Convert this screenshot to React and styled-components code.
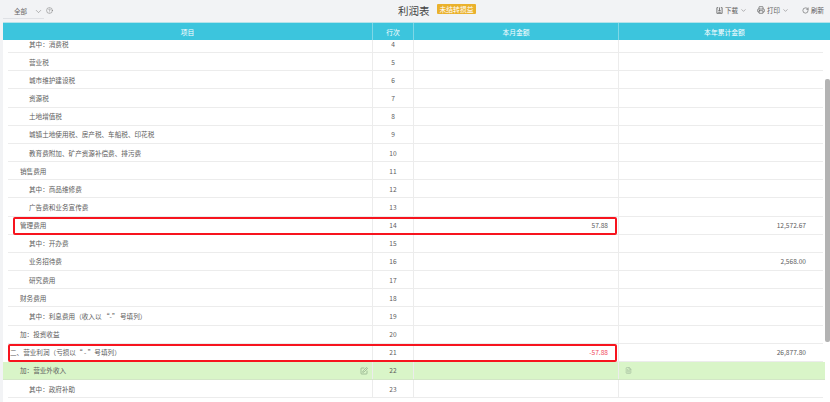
import React from "react";
import styled, { createGlobalStyle } from "styled-components";
import {
  ChevronDown,
  CircleHelp,
  FileText,
  Printer,
  RotateCw,
  SquarePen,
} from "lucide-react";

const ROWS = [
  { name: "其中：消费税", level: 2, no: 4 },
  { name: "营业税", level: 2, no: 5 },
  { name: "城市维护建设税", level: 2, no: 6 },
  { name: "资源税", level: 2, no: 7 },
  { name: "土地增值税", level: 2, no: 8 },
  { name: "城镇土地使用税、房产税、车船税、印花税", level: 2, no: 9 },
  { name: "教育费附加、矿产资源补偿费、排污费", level: 2, no: 10 },
  { name: "销售费用", level: 1, no: 11 },
  { name: "其中：商品维修费", level: 2, no: 12 },
  { name: "广告费和业务宣传费", level: 2, no: 13 },
  { name: "管理费用", level: 1, no: 14, month: "57.88", year: "12,572.67", mark: "inner" },
  { name: "其中：开办费", level: 2, no: 15 },
  { name: "业务招待费", level: 2, no: 16, year: "2,568.00" },
  { name: "研究费用", level: 2, no: 17 },
  { name: "财务费用", level: 1, no: 18 },
  { name: "其中：利息费用（收入以 “-” 号填列）", level: 2, no: 19 },
  { name: "加：投资收益", level: 1, no: 20 },
  { name: "二、营业利润（亏损以“ - ”号填列）", level: 0, no: 21, month: "-57.88", year: "26,877.80", mark: "outer", negative: true },
  { name: "加：营业外收入", level: 1, no: 22, green: true },
  { name: "其中：政府补助", level: 2, no: 23 },
];

function App() {
  return (
    <Page>
      <GlobalStyle />
      <Toolbar>
        <Filter>
          <Select>
            全部
            <ChevronDown size={9} strokeWidth={1.2} />
          </Select>
          <CircleHelp size={7} strokeWidth={1.5} />
        </Filter>
        <TitleGroup>
          <Title>利润表</Title>
          <Badge>未结转损益</Badge>
        </TitleGroup>
        <Actions>
          <Action>
            <svg width="7" height="7" viewBox="0 0 16 16" fill="none" stroke="currentColor" strokeWidth="1.8">
              <path d="M5 1.5H2v13h12v-13h-3" />
              <path d="M8 1v8M5 6.5 8 9.5l3-3M5 12h6" />
            </svg>
            下载
            <ChevronDown size={7} strokeWidth={1.5} />
          </Action>
          <Action>
            <Printer size={8} strokeWidth={2} />
            打印
            <ChevronDown size={7} strokeWidth={1.5} />
          </Action>
          <Action>
            <RotateCw size={7} strokeWidth={2} />
            刷新
          </Action>
        </Actions>
      </Toolbar>

      <Header>
        <HeadCell>项目</HeadCell>
        <HeadCell>行次</HeadCell>
        <HeadCell>本月金额</HeadCell>
        <HeadCell>本年累计金额</HeadCell>
      </Header>

      <Body>
        <List>
          {ROWS.map((row) => (
            <Row key={row.no} $green={row.green}>
              <NameCell $level={row.level}>
                {row.name}
                {row.green && (
                  <NameIcon>
                    <SquarePen size={8} strokeWidth={1.8} />
                  </NameIcon>
                )}
              </NameCell>
              <NoCell>{row.no}</NoCell>
              <AmountCell $negative={row.negative}>{row.month}</AmountCell>
              <YearCell $green={row.green}>
                {row.green ? <FileText size={7} strokeWidth={2} /> : row.year}
              </YearCell>
              {row.mark && <Highlight $mark={row.mark} />}
            </Row>
          ))}
        </List>
        <ScrollThumb />
      </Body>
    </Page>
  );
}

const GlobalStyle = createGlobalStyle`
  html, body {
    margin: 0;
    padding: 0;
    background: #ffffff;
    overflow: hidden;
  }
`;

const Page = styled.div`
  width: 830px;
  height: 402px;
  overflow: hidden;
  display: flex;
  flex-direction: column;
  background: #f2f3f5;
  font-family: "Noto Sans CJK SC", "Liberation Sans", sans-serif;
  font-size: 6.6px;
  color: #5c5c5c;
`;

const Toolbar = styled.div`
  height: 22px;
  flex-shrink: 0;
  display: grid;
  grid-template-columns: 398px auto 1fr;
  align-items: center;
  box-sizing: border-box;
  padding-bottom: 2px;
`;

const Filter = styled.div`
  display: flex;
  align-items: center;
  gap: 2px;
  color: #666;
  padding-left: 3px;
`;

const Select = styled.div`
  width: 41px;
  height: 15px;
  box-sizing: border-box;
  display: flex;
  align-items: center;
  justify-content: space-between;
  padding: 0 1px 0 11px;
  border-bottom: 1px solid #dfe1e5;
  font-size: 6.6px;
  margin-top: 3px;
`;

const TitleGroup = styled.div`
  display: flex;
  align-items: center;
  gap: 7px;
`;

const Title = styled.div`
  font-size: 10.5px;
  color: #444;
`;

const Badge = styled.div`
  height: 10px;
  line-height: 10px;
  padding: 0 3px;
  margin-top: -2px;
  border-radius: 1px;
  background: #eab12c;
  color: #fff;
  font-size: 6.8px;
`;

const Actions = styled.div`
  display: flex;
  justify-content: flex-end;
  align-items: center;
  gap: 13px;
  padding-right: 6px;
`;

const Action = styled.div`
  display: flex;
  align-items: center;
  gap: 2px;
  color: #5c5c5c;
  font-size: 6.5px;
  &:first-child {
    margin-right: -3px;
  }
`;

const Header = styled.div`
  height: 18px;
  flex-shrink: 0;
  margin-left: 3px;
  display: grid;
  grid-template-columns: 370px 41px 205px 1fr;
  background: #3cc5dd;
  border-top: 1px solid #b5e3ea;
  box-sizing: border-box;
  color: #fff;
`;

const HeadCell = styled.div`
  display: flex;
  align-items: center;
  justify-content: center;
  border-right: 1px solid #7fd7e6;
  font-size: 6.8px;
  &:last-child {
    border-right: 0;
  }
`;

const Body = styled.div`
  position: relative;
  flex: 1;
  min-height: 0;
  overflow: hidden;
  background: #fff;
  margin-left: 3px;
`;

const List = styled.div`
  margin-top: -5px;
`;

const Row = styled.div`
  position: relative;
  height: 18.17px;
  box-sizing: border-box;
  display: grid;
  grid-template-columns: 365px 41px 205px 1fr;
  margin: ${(p) => (p.$green ? "0 5px 0 0" : "0 7px 0 5px")};
  padding-left: ${(p) => (p.$green ? "5px" : "0")};
  background: ${(p) => (p.$green ? "#d9f5c8" : "transparent")};
  border-bottom: 1px solid ${(p) => (p.$green ? "#d3e6c7" : "#ececec")};
`;

const Cell = styled.div`
  display: flex;
  align-items: center;
  border-right: 1px solid #ececec;
`;

const NameCell = styled(Cell)`
  position: relative;
  padding-left: ${(p) => [2, 12, 21][p.$level]}px;
`;

const NameIcon = styled.span`
  position: absolute;
  right: 4px;
  top: 5px;
  color: #7d9a78;
  display: flex;
`;

const NoCell = styled(Cell)`
  justify-content: center;
`;

const AmountCell = styled(Cell)`
  justify-content: flex-end;
  padding-right: 10px;
  color: ${(p) => (p.$negative ? "#f0485a" : "#5c5c5c")};
`;

const YearCell = styled(Cell)`
  border-right: 0;
  justify-content: ${(p) => (p.$green ? "flex-start" : "flex-end")};
  padding: ${(p) => (p.$green ? "0 0 0 6px" : "0 17px 0 0")};
  color: ${(p) => (p.$green ? "#9db59a" : "#5c5c5c")};
`;

const Highlight = styled.div`
  position: absolute;
  top: 0;
  bottom: -1px;
  left: ${(p) => (p.$mark === "inner" ? "5px" : "0")};
  width: ${(p) => (p.$mark === "inner" ? "604px" : "609px")};
  box-sizing: border-box;
  border: 2px solid #f7141e;
  border-radius: 2px;
  pointer-events: none;
`;

const ScrollThumb = styled.div`
  position: absolute;
  right: 0;
  top: 39px;
  width: 5px;
  height: 263px;
  border-radius: 2px;
  background: #b3b3b3;
`;

export default App;
